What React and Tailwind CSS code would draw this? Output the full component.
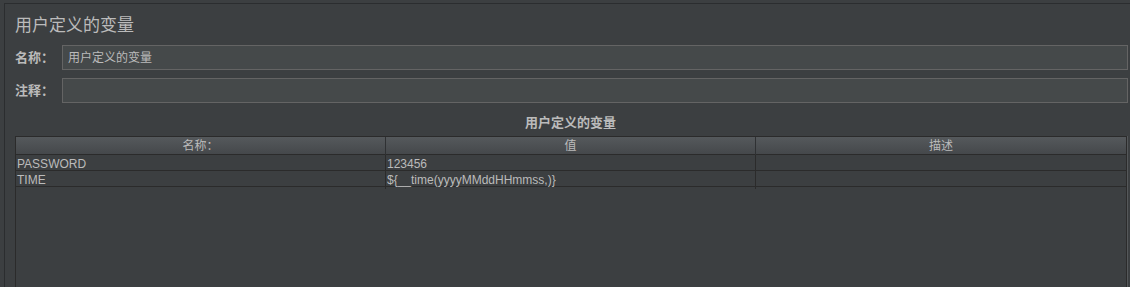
import React from 'react'

const font = { fontFamily: '"Liberation Sans", "Noto Sans CJK SC", sans-serif' }

const rows = [
    { name: 'PASSWORD', value: '123456', desc: '' },
    { name: 'TIME', value: '${__time(yyyyMMddHHmmss,)}', desc: '' },
]

const Field = ({ label, value }) => (
    <div className="flex items-center h-[25px]">
        <div className="w-[47px] shrink-0 text-[13px] font-bold text-[#bbbbbb] leading-none">{label}</div>
        <div className="flex-1 h-[25px] border border-[#646464] bg-[#45494a] flex items-center px-[5px] text-[12px] text-[#bbbbbb]">
            {value}
        </div>
    </div>
)

export default function App() {
    return (
        <div className="w-[1130px] h-[287px] bg-[#3c3f41] overflow-hidden pt-[3px] pl-[4px]" style={font}>
            <div className="h-full border-t border-l border-[#2b2d2f] pl-[10px] pr-[2px] flex flex-col">
                {/* Title */}
                <div className="mt-[11px] h-[21px] flex items-center text-[17px] text-[#bbbbbb]">用户定义的变量</div>

                {/* Name / comment fields */}
                <div className="mt-[9px] flex flex-col gap-[8px]">
                    <Field label="名称：" value="用户定义的变量" />
                    <Field label="注释：" value="" />
                </div>

                {/* Table title */}
                <div className="mt-[10px] h-[20px] flex items-center justify-center pr-[2px] text-[13px] font-bold text-[#bbbbbb]">
                    用户定义的变量
                </div>

                {/* Table */}
                <div className="mt-[3px] flex-1 flex">
                    <div className="w-[1112px] border-l border-r border-t border-[#2b2b2b] flex flex-col">
                        <div className="grid grid-cols-3 h-[18px] border-b border-[#2b2b2b] bg-gradient-to-b from-[#55595c] to-[#45484b]">
                            <div className="border-r border-[#2f3133] flex items-center justify-center text-[12px] text-[#bbbbbb]">名称：</div>
                            <div className="border-r border-[#2f3133] flex items-center justify-center text-[12px] text-[#bbbbbb]">值</div>
                            <div className="flex items-center justify-center text-[12px] text-[#bbbbbb]">描述</div>
                        </div>
                        {rows.map((r) => (
                            <div key={r.name} className="grid grid-cols-3 h-[16px] border-b border-[#2b2b2b]">
                                <div className="border-r border-[#2b2b2b] px-[1px] flex items-center text-[12px] text-[#bbbbbb] whitespace-nowrap">{r.name}</div>
                                <div className="border-r border-[#2b2b2b] px-[1px] flex items-center text-[12px] text-[#bbbbbb] whitespace-nowrap">{r.value}</div>
                                <div className="px-[1px] flex items-center text-[12px] text-[#bbbbbb]">{r.desc}</div>
                            </div>
                        ))}
                    </div>
                    <div className="w-[1px] bg-[#55585a]" />
                </div>
            </div>
        </div>
    )
}
